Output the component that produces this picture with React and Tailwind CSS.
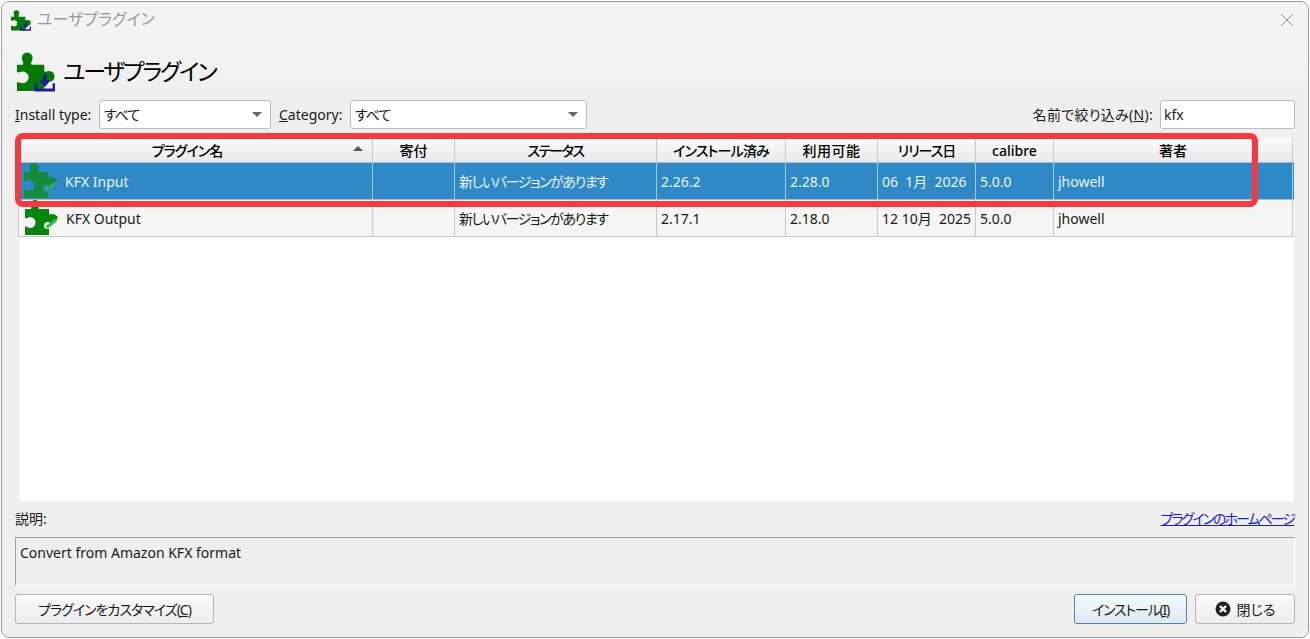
import React from 'react';

const FONT = '"Noto Sans", "Noto Sans CJK JP", sans-serif';
const COL_WIDTHS = 'grid-cols-[355px_82px_202px_129px_92px_98px_78px_239px]';

const headers = [
  { label: 'プラグイン名', cls: 'tracking-[-1px] pr-[16px]' },
  { label: '寄付', cls: '' },
  { label: 'ステータス', cls: 'tracking-[-1.6px]' },
  { label: 'インストール済み', cls: 'tracking-[-0.8px]' },
  { label: '利用可能', cls: 'tracking-[0.5px]' },
  { label: 'リリース日', cls: 'tracking-[-1px]' },
  { label: 'calibre', cls: '' },
  { label: '著者', cls: '' },
];

const rows = [
  { name: 'KFX Input', status: '新しいバージョンがあります', installed: '2.26.2', available: '2.28.0', date: '06  1月  2026', calibre: '5.0.0', author: 'jhowell', selected: true },
  { name: 'KFX Output', status: '新しいバージョンがあります', installed: '2.17.1', available: '2.18.0', date: '12 10月  2025', calibre: '5.0.0', author: 'jhowell', selected: false },
];

const PUZZLE = 'M2 13H8C9.5 11 7 9.5 7 6A5.5 5.5 0 0 1 18 6C18 9.5 15.5 11 17 13H30V20C31.5 21 32 19.5 35 19.5A5.5 5.5 0 0 1 35 30.5C32 30.5 31.5 29 30 30V40H2V31.5C4 30 5 32 8 32A6 6 0 0 0 8 20C5 20 4 22 2 20.5Z';

const InstallIcon = ({ className }) => (
  <svg viewBox="0 0 41 41" className={className}>
    <path d={PUZZLE} fill="#047a04" />
    <path d="M21.5 32V39H40V32" fill="none" stroke="#1f1f9c" strokeWidth="3" />
    <path d="M30.7 23V32" fill="none" stroke="#1f1f9c" strokeWidth="3.6" />
    <path d="M25 29L30.700 36L36.400 29Z" fill="#1f1f9c" />
  </svg>
);

const RowIcon = ({ selected }) => (
  <svg viewBox="0 0 36 36" className="w-9 h-9 shrink-0">
    <path
      d="M2 9H8C9 7.500 7.500 6 7.500 4.500A4.500 4.500 0 0 1 16.500 4.500C16.500 6 15 7.500 16 9H26V14C28 15 29 13.500 31 14L35 17L33 21C32 23 30 24 26 23.500V35H2V26.500C4 26 5 28 7 28A5.500 5.500 0 0 0 7 17C5 17 4 19 2 18Z"
      fill={selected ? '#148a3c' : '#07860f'}
    />
    <circle cx="24.500" cy="25.500" r="3.500" fill={selected ? '#2f89c6' : '#f5f5f5'} />
    <path d="M23.500 27.500L33 20" stroke={selected ? '#2fae5a' : '#2cc24a'} strokeWidth="3" fill="none" />
  </svg>
);

const Select = ({ className }) => (
  <div className={`h-[29px] flex items-center justify-between pl-[4px] pr-[8px] bg-white border border-[#bdbdbd] rounded-[3px] text-[14px] ${className}`}>
    <span className="tracking-[-1px]">すべて</span>
    <span className="w-0 h-0 border-x-[5px] border-x-transparent border-t-[5px] border-t-[#666]" />
  </div>
);

const Cell = ({ children, selected, className = '' }) => (
  <div
    className={`flex items-center pl-[4px] overflow-hidden whitespace-pre border-r ${
      selected ? 'border-[#a9cce4] text-[#e9f4fb]' : 'border-[#c8c8c8] text-[#1a1a1a]'
    } ${className}`}
  >
    {children}
  </div>
);

export default function App() {
  return (
    <div
      className="relative w-[1310px] h-[639px] bg-white overflow-hidden text-[14px] text-[#1a1a1a] [font-feature-settings:'palt']"
      style={{ fontFamily: FONT }}
    >
      <div className="w-[1308px] h-[637px] ml-px mt-px flex flex-col bg-[#f0f0f0] border border-[#9a9a9a] rounded-[8px] overflow-hidden">
        {/* title bar */}
        <div className="h-[36px] shrink-0 flex items-center pl-[8px] pr-[14px] bg-[#f3f3f3]">
          <InstallIcon className="w-[21px] h-[21px]" />
          <span className="ml-[6px] -mt-[2px] text-[16px] text-[#9a9a9a]">ユーザプラグイン</span>
          <svg viewBox="0 0 14 14" className="ml-auto w-[14px] h-[14px]">
            <path d="M1 1L13 13M13 1L1 13" stroke="#8f8f8f" strokeWidth="1" />
          </svg>
        </div>

        <div className="flex-1 flex flex-col px-[13px] bg-gradient-to-b from-[#f3f3f3] to-[#efefef] to-[10%]">
          {/* heading */}
          <div className="h-[54px] mt-[6px] flex items-center shrink-0">
            <InstallIcon className="w-[40px] h-[40px] mt-px" />
            <span className="ml-[8px] text-[23px] tracking-[-2.1px] text-black">ユーザプラグイン</span>
          </div>

          {/* filters */}
          <div className="h-[29px] mt-[2px] flex items-center shrink-0">
            <span className="w-[84px]"><span className="underline">I</span>nstall type:</span>
            <Select className="w-[172px]" />
            <span className="ml-[8px] w-[71px]"><span className="underline">C</span>ategory:</span>
            <Select className="w-[237px]" />
            <span className="ml-auto mr-[7px] tracking-[0.3px]">名前で絞り込み(<span className="underline">N</span>):</span>
            <input
              readOnly
              value="kfx"
              className="w-[135px] h-[29px] pl-[3px] bg-white border border-[#bdbdbd] rounded-[3px] outline-none"
            />
          </div>

          {/* plugin table */}
          <div className="h-[363px] mt-[9px] shrink-0 ml-[4px] mr-px bg-white">
            <div className={`-ml-[1px] grid ${COL_WIDTHS} h-[25px] bg-gradient-to-b from-[#fbfbfb] to-[#e9e9e9] border-b border-[#a9bccb]`}>
              {headers.map((h, i) => (
                <div key={h.label} className={`relative flex items-center justify-center border-r border-[#c8c8c8] font-medium text-black text-[14px] ${h.cls}`}>
                  {h.label}
                  {i === 0 && <span className="absolute right-[9px] top-[8px] w-0 h-0 border-x-[5px] border-x-transparent border-b-[5px] border-b-[#555]" />}
                </div>
              ))}
            </div>
            {rows.map((r) => (
              <div
                key={r.name}
                className={`-ml-[1px] grid ${COL_WIDTHS} h-[37px] border-b ${
                  r.selected ? 'bg-[#2f89c6] border-[#a9bccb]' : 'bg-[#f5f5f5] border-[#c8c8c8]'
                }`}
              >
                <Cell selected={r.selected} className={r.selected ? 'pl-[3px]' : 'pl-[2px] border-l'}>
                  <RowIcon selected={r.selected} />
                  <span className="ml-[7px]">{r.name}</span>
                </Cell>
                <Cell selected={r.selected} />
                <Cell selected={r.selected}><span className="tracking-[-1.4px]">{r.status}</span></Cell>
                <Cell selected={r.selected}>{r.installed}</Cell>
                <Cell selected={r.selected}>{r.available}</Cell>
                <Cell selected={r.selected}>{r.date}</Cell>
                <Cell selected={r.selected}>{r.calibre}</Cell>
                <Cell selected={r.selected}>{r.author}</Cell>
              </div>
            ))}
          </div>

          {/* description */}
          <div className="h-[36px] pb-[2px] shrink-0 flex items-center justify-between pr-px">
            <span>説明:</span>
            <a className="text-[#1a1ad0] underline tracking-[-2px]">プラグインのホームページ</a>
          </div>
          <div className="h-[49px] shrink-0 pl-[4px] pt-[4px] bg-[#eeeeee] border-t border-l border-[#9f9f9f] border-r border-b border-r-white border-b-white">
            Convert from Amazon KFX format
          </div>

          {/* buttons */}
          <div className="mt-[8px] flex shrink-0">
            <button className="w-[199px] h-[30px] bg-gradient-to-b from-[#fafafa] to-[#ececec] border border-[#b5b5b5] rounded-[3px] tracking-[-1px]">
              プラグインをカスタマイズ(<span className="underline">C</span>)
            </button>
            <button className="ml-auto w-[113px] h-[30px] bg-gradient-to-b from-[#f4f9fc] to-[#dfeaf2] border border-[#4f86a8] rounded-[3px] tracking-[-1.2px]">
              インストール(<span className="underline">I</span>)
            </button>
            <button className="ml-[8px] w-[100px] h-[30px] flex items-center justify-center gap-[6px] bg-gradient-to-b from-[#fafafa] to-[#ececec] border border-[#b5b5b5] rounded-[3px]">
              <svg viewBox="0 0 16 16" className="w-[16px] h-[16px]">
                <circle cx="8" cy="8" r="7.500" fill="#222" />
                <path d="M5 5L11 11M11 5L5 11" stroke="#fff" strokeWidth="2.400" />
              </svg>
              閉じる
            </button>
          </div>
        </div>
      </div>

      {/* red annotation box drawn over the screenshot */}
      <div className="absolute left-[15px] top-[133px] w-[1243px] h-[74px] border-[6px] border-[#f5393f] rounded-[8px] pointer-events-none" />
    </div>
  );
}
